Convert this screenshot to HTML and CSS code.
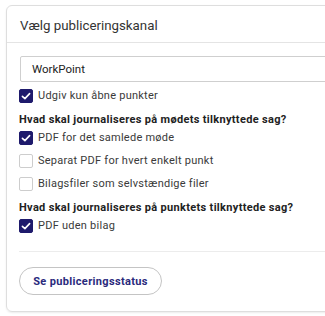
FILE: index.html
```html
<!DOCTYPE html>
<html lang="da">
<head>
<meta charset="utf-8">
<link rel="stylesheet" href="styles.css">
</head>
<body>
<div class="card">
  <div class="card-header">Vælg publiceringskanal</div>
  <div class="card-body">
    <div class="select">WorkPoint</div>
    <label class="check-row first">
      <span class="box checked"><svg viewBox="0 0 14 14" width="14" height="14"><path d="M3.4 7.3 L5.9 9.6 L10.6 4.6" fill="none" stroke="#fff" stroke-width="1.6" stroke-linecap="round" stroke-linejoin="round"/></svg></span>
      <span class="label">Udgiv kun åbne punkter</span>
    </label>
    <div class="question">Hvad skal journaliseres på mødets tilknyttede sag?</div>
    <label class="check-row">
      <span class="box checked"><svg viewBox="0 0 14 14" width="14" height="14"><path d="M3.4 7.3 L5.9 9.6 L10.6 4.6" fill="none" stroke="#fff" stroke-width="1.6" stroke-linecap="round" stroke-linejoin="round"/></svg></span>
      <span class="label">PDF for det samlede møde</span>
    </label>
    <label class="check-row">
      <span class="box"></span>
      <span class="label">Separat PDF for hvert enkelt punkt</span>
    </label>
    <label class="check-row">
      <span class="box"></span>
      <span class="label">Bilagsfiler som selvstændige filer</span>
    </label>
    <div class="question">Hvad skal journaliseres på punktets tilknyttede sag?</div>
    <label class="check-row">
      <span class="box checked"><svg viewBox="0 0 14 14" width="14" height="14"><path d="M3.4 7.3 L5.9 9.6 L10.6 4.6" fill="none" stroke="#fff" stroke-width="1.6" stroke-linecap="round" stroke-linejoin="round"/></svg></span>
      <span class="label">PDF uden bilag</span>
    </label>
    <div class="divider"></div>
    <button class="status-btn">Se publiceringsstatus</button>
  </div>
</div>
</body>
</html>
```
FILE: styles.css
```css
html, body {
  margin: 0;
  padding: 0;
  background: #ffffff;
  overflow: hidden;
  width: 325px;
  height: 316px;
}
body {
  font-family: Roboto, "Liberation Sans", sans-serif;
  color: #333;
}
.card {
  margin: 5px 0 0 6px;
  width: 400px;
  height: 307px;
  border: 1px solid #dedede;
  border-radius: 6px;
  box-shadow: 0 1px 2px rgba(0,0,0,0.08);
  box-sizing: border-box;
}
.card-header {
  height: 37px;
  box-sizing: border-box;
  padding: 2px 13px 0 13px;
  display: flex;
  align-items: center;
  font-size: 13.3px;
  color: #333;
  border-bottom: 1px solid #e4e4e4;
}
.card-body {
  padding: 13px 12px 0 12px;
  display: flex;
  flex-direction: column;
  align-items: flex-start;
}
.select {
  width: 100%;
  height: 26px;
  box-sizing: border-box;
  border: 1px solid #cfcfcf;
  border-radius: 2px;
  padding-left: 11px;
  display: flex;
  align-items: center;
  font-size: 11.5px;
  color: #222;
  margin-left: 1px;
}
.check-row {
  display: flex;
  align-items: center;
  height: 23px;
  gap: 5px;
}
.check-row.first {
  margin-top: 2px;
}
.box {
  width: 14px;
  height: 14px;
  box-sizing: border-box;
  border: 1px solid #cdcdcd;
  border-radius: 2px;
  background: #fff;
  display: flex;
  flex: none;
}
.box.checked {
  background: #1e1a6c;
  border-color: #1e1a6c;
}
.box.checked svg {
  margin: -1px;
}
.label {
  font-size: 11px;
  letter-spacing: 0.25px;
  color: #3a3a3a;
}
.question {
  margin-top: 6px;
  line-height: 13px;
  font-size: 11px;
  font-weight: 700;
  letter-spacing: 0.32px;
  color: #222;
}
.divider {
  align-self: stretch;
  height: 1px;
  background: #ececec;
  margin-top: 14px;
}
.status-btn {
  margin-top: 15px;
  height: 28px;
  width: 143px;
  box-sizing: border-box;
  border: 1px solid #c4c4c4;
  border-radius: 14px;
  background: #fff;
  font-family: Roboto, "Liberation Sans", sans-serif;
  font-size: 11px;
  font-weight: 700;
  letter-spacing: 0.35px;
  color: #2a2a7c;
  padding: 0;
  display: flex;
  align-items: center;
  justify-content: center;
}
```
